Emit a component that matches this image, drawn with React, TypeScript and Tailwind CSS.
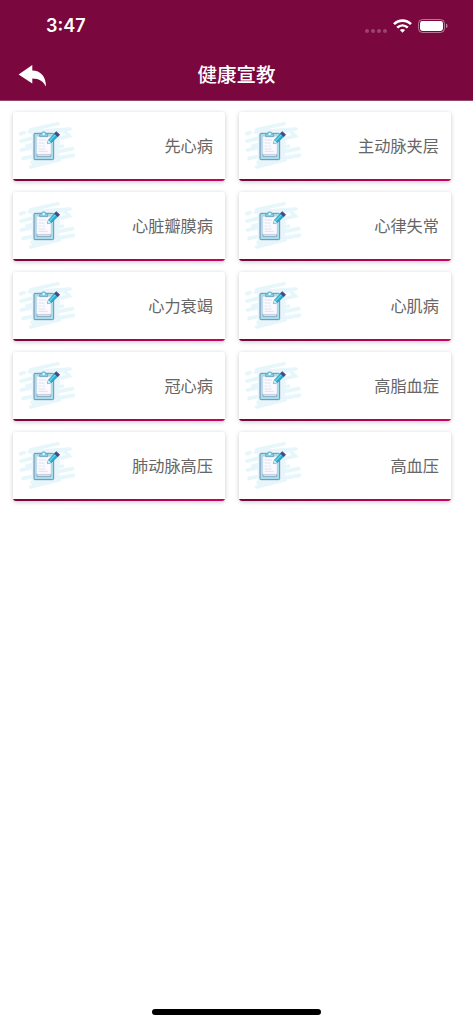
import React from 'react';

const topics = [
  '先心病',
  '主动脉夹层',
  '心脏瓣膜病',
  '心律失常',
  '心力衰竭',
  '心肌病',
  '冠心病',
  '高脂血症',
  '肺动脉高压',
  '高血压',
];

function ClipboardIcon() {
  return (
    <svg className="w-[60px] h-[52px] flex-shrink-0" viewBox="24 36 180 156" fill="none">
      {/* Brush strokes */}
      <g stroke="#e6f6fb" strokeWidth="11" strokeLinecap="round">
        <path d="M62 68L144 50" />
        <path d="M32 80L42 77" />
        <path d="M58 75L180 66" />
        <path d="M33 102L150 73" />
        <path d="M50 117L178 87L162 71" />
        <path d="M34 129L145 106" />
        <path d="M70 134L158 117" />
        <path d="M39 154L188 125" />
        <path d="M66 166L190 145" />
        <path d="M62 180L148 158" />
      </g>
      <path d="M65 79L148 62V158L66 174Z" fill="#e6f6fb" />

      {/* Board and paper */}
      <rect x="72" y="79" width="59" height="79" rx="3" fill="#a5dfeb" stroke="#7789ad" strokeWidth="3" />
      <path d="M81 141H122V148H81Z" fill="#e9eaf5" stroke="#7f86ae" strokeWidth="2" />
      <path d="M80 88H123V142H80Z" fill="#fafaff" stroke="#c5cadf" strokeWidth="1.5" />
      <g stroke="#dadbea" strokeWidth="2.5">
        <path d="M86 99H108M86 108H103M86 117H94M98 117H105M86 126H106M86 133H113" />
      </g>

      {/* Clip */}
      <path
        d="M89 89V83L94 80C94 73 108 73 108 80L113 83V89Z"
        fill="#83d3e4"
        stroke="#6c9fbe"
        strokeWidth="2.5"
      />
      <circle cx="101" cy="81" r="3" fill="#fff" />

      {/* Pencil */}
      <path d="M112 110L115 99L136 78L145 87L124 107Z" fill="#28acd0" stroke="#5482aa" strokeWidth="2" />
      <path d="M119 101L138 82" stroke="#62d1e5" strokeWidth="4" />
      <path d="M112 110L115 99L123 107Z" fill="#cceef5" />
      <path d="M133 79L139 74L149 83L143 89Z" fill="#4b4879" stroke="#4b4879" strokeWidth="2" strokeLinejoin="round" />
    </svg>
  );
}

function StatusBar() {
  return (
    <div className="h-[52px] flex items-center justify-between pl-[46px] pr-[25px]">
      <span className="font-['Inter'] text-[18px] leading-none font-semibold">3:47</span>
      <div className="flex items-center">
        <div className="flex gap-[2px] mt-[9px] mr-[6px]">
          {[0, 1, 2, 3].map((dot) => (
            <span key={dot} className="w-[4px] h-[4px] rounded-full bg-white/25" />
          ))}
        </div>
        <svg className="w-[19px] h-[14px] mr-[6px]" viewBox="0 0 19 14" fill="none" stroke="#fff" strokeWidth="2.6">
          <path d="M1 5.2C5.8 .4 13.2 .4 18 5.2" />
          <path d="M4.2 8.6C7.3 5.7 11.7 5.7 14.8 8.6" />
          <path d="M9.5 13.7L6.9 11C8.3 9.5 10.7 9.5 12.1 11Z" fill="#fff" stroke="none" />
        </svg>
        <svg className="w-[30px] h-[14px]" viewBox="0 0 30 14" fill="none">
          <rect x=".5" y=".5" width="26" height="13" rx="4" stroke="#fff" strokeOpacity=".45" />
          <rect x="2" y="2" width="23" height="10" rx="2.4" fill="#fff" />
          <path d="M28 4.8C30 5.4 30 8.6 28 9.2Z" fill="#fff" fillOpacity=".5" />
        </svg>
      </div>
    </div>
  );
}

function TopicCard({ title }: { title: string }) {
  return (
    <button className="h-[69px] flex flex-col rounded-[3px] overflow-hidden bg-white shadow-[0_1px_4px_rgba(0,0,0,0.22)]">
      <span className="w-full flex-1 flex items-center justify-between pl-[5px] pr-[12px]">
        <ClipboardIcon />
        <span className="text-[16.2px] leading-6 text-[#666666] pt-[2px]">{title}</span>
      </span>
      <span className="w-full h-[2.5px] flex-shrink-0 bg-gradient-to-r from-[#78063c] to-[#cc0066]" />
    </button>
  );
}

export default function App() {
  return (
    <div className="h-screen flex flex-col bg-white overflow-hidden font-['Liberation_Sans','Noto_Sans_CJK_SC',sans-serif]">
      <header className="h-[101px] flex-shrink-0 bg-[#7a073d] text-white border-b border-[#98456c]">
        <StatusBar />
        <div className="h-[48px] grid grid-cols-[60px_1fr_60px] items-center">
          <button className="pl-[18px]" aria-label="返回">
            <svg className="w-[29px] h-[24px]" viewBox="0 0 29 24" fill="#fff">
              <path d="M.6 10.5L14.3 1V6.5C22.5 6.5 28 12.5 28 22.6C25.4 17.5 21.6 14.4 14.3 14.4V19.5Z" />
            </svg>
          </button>
          <h1 className="text-center text-[19.5px] leading-none font-medium">健康宣教</h1>
        </div>
      </header>

      <main className="flex-1 pt-[11px] pl-[13px] pr-[22px]">
        <div className="grid grid-cols-2 gap-x-[14px] gap-y-[11px]">
          {topics.map((topic) => (
            <TopicCard key={topic} title={topic} />
          ))}
        </div>
      </main>

      <footer className="flex justify-center pb-[9px]">
        <div className="w-[169px] h-[6px] rounded-full bg-black" />
      </footer>
    </div>
  );
}
